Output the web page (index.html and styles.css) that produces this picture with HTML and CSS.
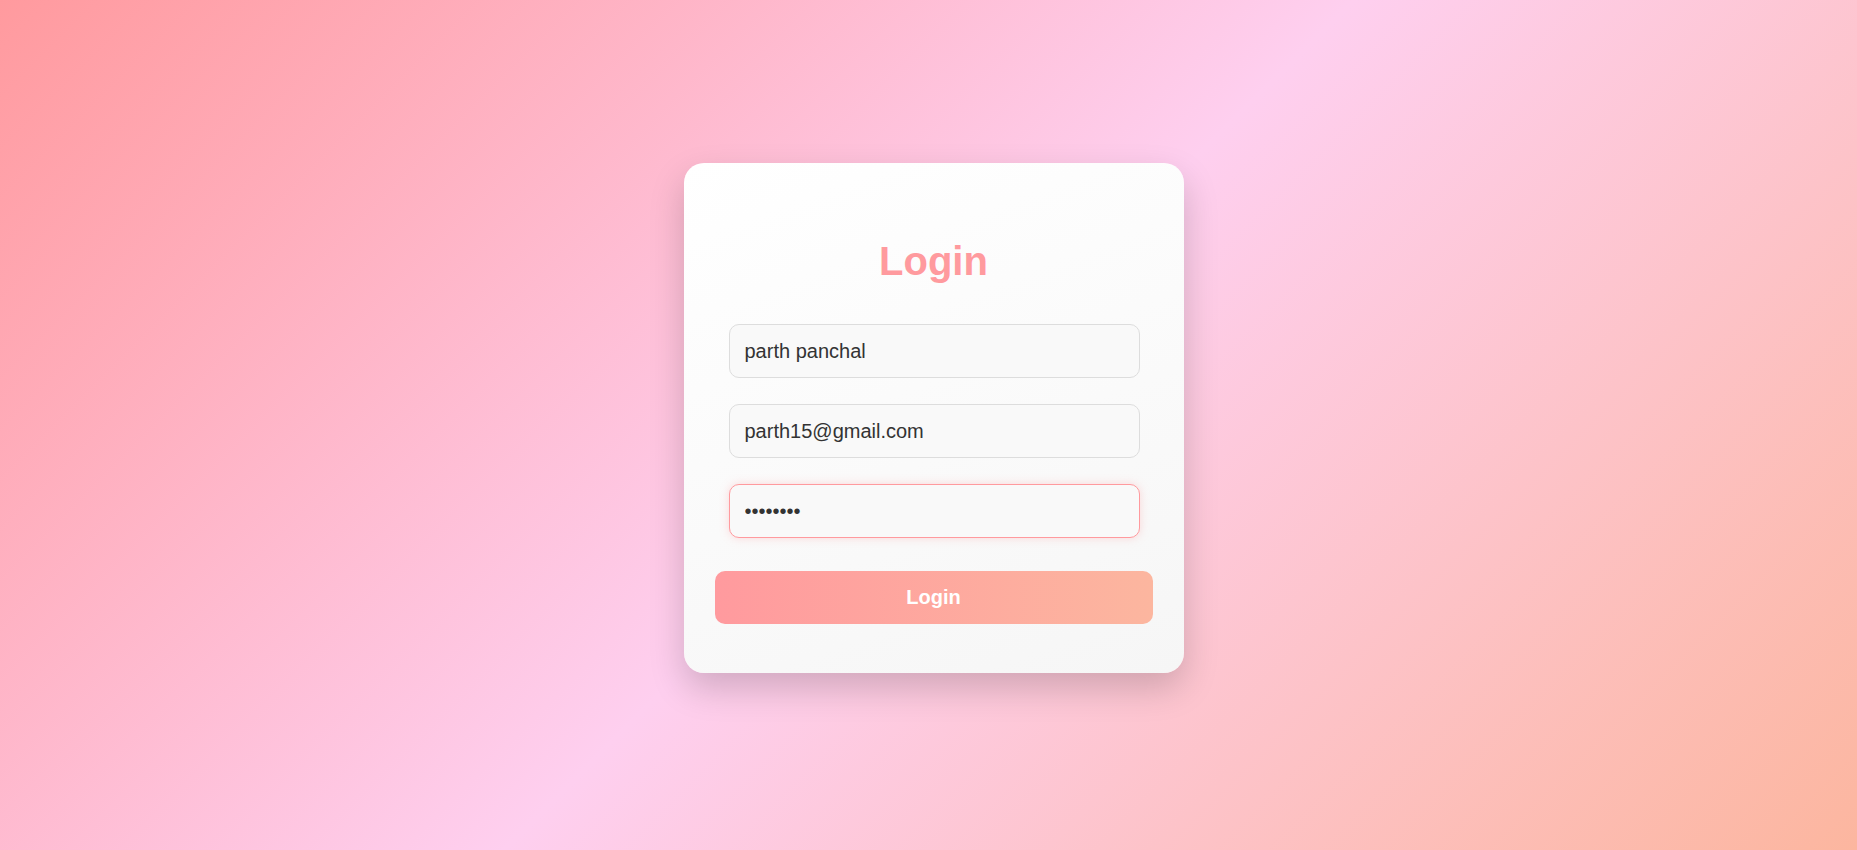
FILE: index.html
```html
<!DOCTYPE html>
<html lang="en">
<head>
<meta charset="utf-8">
<title>Login</title>
<link rel="stylesheet" href="styles.css">
</head>
<body>
  <div class="card">
    <h1 class="title">Login</h1>
    <form class="form">
      <div class="fields">
        <input class="field" type="text" value="parth panchal">
        <input class="field" type="email" value="parth15@gmail.com">
        <input class="field field-active" type="password" value="12345678">
      </div>
      <button class="btn" type="button">Login</button>
    </form>
  </div>
</body>
</html>
```

FILE: styles.css
```css
* { box-sizing: border-box; }
html, body { margin: 0; height: 100%; }
body {
  font-family: "Liberation Sans", Arial, sans-serif;
  background: linear-gradient(135deg, #ff9a9e 0%, #fecfef 50%, #fcb69f 100%);
  display: flex;
  justify-content: center;
  align-items: center;
  padding: 0 0 14px 10px;
  height: 100vh;
}
.card {
  width: 500px;
  padding: 75px 31px 49px 31px;
  border-radius: 20px;
  background: linear-gradient(160deg, #ffffff 0%, #f6f6f6 100%);
  box-shadow: 0 15px 35px rgba(0, 0, 0, 0.18);
}
.title {
  margin: 0 0 40px;
  text-align: center;
  font-size: 40px;
  line-height: 46px;
  font-weight: bold;
  color: #ff9a9e;
}
.form {
  display: flex;
  flex-direction: column;
  gap: 33px;
}
.fields {
  display: flex;
  flex-direction: column;
  gap: 26px;
  padding: 0 13px 0 14px;
}
.field {
  display: block;
  width: 100%;
  height: 54px;
  padding: 0 15px;
  border: 1px solid #dddddd;
  border-radius: 10px;
  background: #f9f9f9;
  font-family: "Liberation Sans", Arial, sans-serif;
  font-size: 20px;
  color: #333333;
  outline: none;
}
.field-active {
  border-color: #ff9a9e;
  box-shadow: 0 0 10px rgba(255, 154, 158, 0.35);
}
.btn {
  display: block;
  width: 100%;
  height: 53px;
  border: none;
  border-radius: 10px;
  background: linear-gradient(to right, #ff9a9e 0%, #fcb69f 100%);
  color: #ffffff;
  font-family: "Liberation Sans", Arial, sans-serif;
  font-size: 20px;
  font-weight: bold;
  cursor: pointer;
}
```
